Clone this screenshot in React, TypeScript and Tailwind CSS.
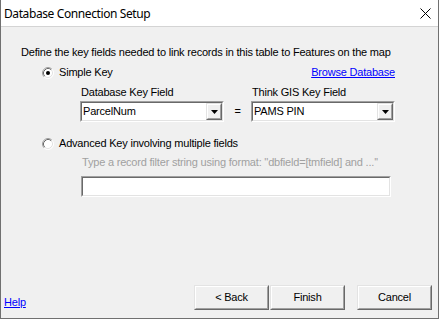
import React from "react";

function Radio({ checked }: { checked?: boolean }) {
  return (
    <svg width="12" height="12" viewBox="0 0 12 12" className="shrink-0">
      <circle cx="6" cy="6" r="5" fill="#ffffff" />
      <path d="M2.11 9.89 A5.5 5.5 0 0 1 9.89 2.11" fill="none" stroke="#a0a0a0" strokeWidth="1" />
      <path d="M9.89 2.11 A5.5 5.5 0 0 1 2.11 9.89" fill="none" stroke="#ffffff" strokeWidth="1" />
      <path d="M2.82 9.18 A4.5 4.5 0 0 1 9.18 2.82" fill="none" stroke="#696969" strokeWidth="1" />
      <path d="M9.18 2.82 A4.5 4.5 0 0 1 2.82 9.18" fill="none" stroke="#e3e3e3" strokeWidth="1" />
      {checked && <circle cx="6" cy="6" r="2" fill="#000000" />}
    </svg>
  );
}

function Sunken({ className, children }: { className: string; children?: React.ReactNode }) {
  return (
    <div className={`border border-t-[#a0a0a0] border-l-[#a0a0a0] border-b-white border-r-white ${className}`}>
      <div className="h-full w-full border border-t-[#696969] border-l-[#696969] border-b-[#e3e3e3] border-r-[#e3e3e3] bg-white flex items-center">
        {children}
      </div>
    </div>
  );
}

function Combo({ value, className }: { value: string; className: string }) {
  return (
    <Sunken className={className}>
      <span className="flex-1 pl-[1px] leading-[13px]">{value}</span>
      <div className="h-full w-[16px] border border-t-[#e3e3e3] border-l-[#e3e3e3] border-b-[#696969] border-r-[#696969]">
        <div className="h-full w-full border border-t-white border-l-white border-b-[#a0a0a0] border-r-[#a0a0a0] bg-[#f0f0f0] flex items-center justify-center">
          <svg width="7" height="4" viewBox="0 0 7 4">
            <path d="M0 0 H7 L3.5 4 Z" fill="#000" />
          </svg>
        </div>
      </div>
    </Sunken>
  );
}

function Button({ label, className = "" }: { label: string; className?: string }) {
  return (
    <div className={`w-[75px] h-[25px] border border-t-[#e3e3e3] border-l-[#e3e3e3] border-b-[#696969] border-r-[#696969] ${className}`}>
      <div className="h-full w-full border border-t-white border-l-white border-b-[#a0a0a0] border-r-[#a0a0a0] bg-[#f0f0f0] flex items-center justify-center">
        {label}
      </div>
    </div>
  );
}

export default function App() {
  return (
    <div className="w-[441px] h-[319px] bg-white text-black font-['Liberation_Sans',Arial,sans-serif] text-[11px] leading-[13px] tracking-[-0.2px]">
      <div className="w-[439px] h-[319px] flex flex-col border-l border-r border-b border-[#707070]">
        <div className="h-[27px] shrink-0 bg-white border-b border-[#d4d4d4] flex items-center justify-between pl-[3px] pr-[7px]">
          <span className="font-['Noto_Sans',sans-serif] text-[12px] leading-[16px] mt-[1px] tracking-[-0.4px]">Database Connection Setup</span>
          <svg width="11" height="11" viewBox="0 0 11 11" className="mt-[1px]">
            <path d="M0.5 0.5 L10.5 10.5 M10.5 0.5 L0.5 10.5" stroke="#000" strokeWidth="1" />
          </svg>
        </div>
        <div className="flex-1 bg-[#f0f0f0] flex flex-col">
          <div className="flex flex-col pl-[20px]">
            <div className="mt-[19px] h-[13px]">Define the key fields needed to link records in this table to Features on the map</div>
            <div className="mt-[7px] h-[13px] flex items-center">
              <div className="ml-[21px] flex items-center gap-[5px]">
                <Radio checked />
                <span>Simple Key</span>
              </div>
              <a className="ml-auto mr-[43px] text-[#0000ff] underline underline-offset-[1px]">Browse Database</a>
            </div>
            <div className="mt-[7px] h-[13px] flex">
              <span className="ml-[60px] w-[171px]">Database Key Field</span>
              <span>Think GIS Key Field</span>
            </div>
            <div className="mt-[2px] flex items-center">
              <Combo value="ParcelNum" className="ml-[59px] w-[144px] h-[21px]" />
              <span className="w-[27px] text-center">=</span>
              <Combo value="PAMS PIN" className="w-[144px] h-[21px]" />
            </div>
            <div className="mt-[15px] h-[13px] flex items-center">
              <div className="ml-[21px] flex items-center gap-[5px]">
                <Radio />
                <span>Advanced Key involving multiple fields</span>
              </div>
            </div>
            <div className="mt-[6px] h-[13px] ml-[61px] text-[#a0a0a0]">Type a record filter string using format: ''dbfield=[tmfield] and ...''</div>
            <div className="mt-[7px]">
              <Sunken className="ml-[60px] w-[310px] h-[21px]" />
            </div>
          </div>
          <div className="mt-auto mb-[8px] flex items-end pl-[3px] pr-[6px]">
            <a className="mb-[1px] text-[#0000ff] underline underline-offset-[1px]">Help</a>
            <div className="ml-auto flex">
              <Button label="< Back" />
              <Button label="Finish" className="ml-[1px]" />
              <Button label="Cancel" className="ml-[12px]" />
            </div>
          </div>
        </div>
      </div>
    </div>
  );
}
